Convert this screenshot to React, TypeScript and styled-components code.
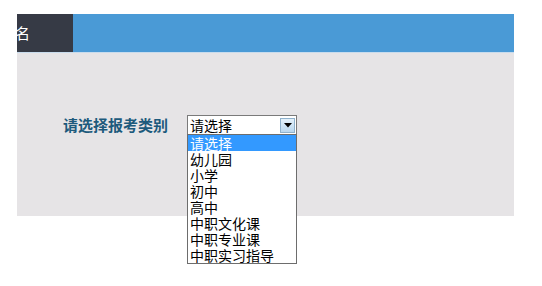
import styled, { createGlobalStyle } from 'styled-components';

const options = ['请选择', '幼儿园', '小学', '初中', '高中', '中职文化课', '中职专业课', '中职实习指导'];

const GlobalStyle = createGlobalStyle`
  html, body {
    margin: 0;
    padding: 0;
    background: #ffffff;
  }
  body {
    font-family: "Noto Sans CJK SC", "Noto Sans", sans-serif;
  }
`;

const App = () => {
  const selected = 0;

  return (
    <Page>
      <GlobalStyle />
      <Panel>
        <Header>
          <Tab>
            <TabText>名</TabText>
          </Tab>
          <Bar />
        </Header>
        <Body>
          <FormRow>
            <Label>请选择报考类别</Label>
            <SelectWrap>
              <SelectBox>
                <SelectValue>{options[selected]}</SelectValue>
                <ArrowButton>
                  <svg width="8" height="5" viewBox="0 0 8 5">
                    <path d="M0 0 H8 L4 4.5 Z" fill="#000" />
                  </svg>
                </ArrowButton>
              </SelectBox>
              <OptionList>
                {options.map((o, i) => (
                  <Option key={o} active={i === selected}>
                    {o}
                  </Option>
                ))}
              </OptionList>
            </SelectWrap>
          </FormRow>
        </Body>
      </Panel>
    </Page>
  );
};

const Page = styled.div`
  padding: 14px 0 0 17px;
  height: 286px;
  box-sizing: border-box;
`;

const Panel = styled.div`
  width: 497px;
`;

const Header = styled.div`
  display: flex;
  height: 38px;
  border-bottom: 1px solid #c9dced;
`;

const Tab = styled.div`
  width: 56px;
  background: #363a45;
  display: flex;
  align-items: center;
  overflow: hidden;
`;

const TabText = styled.span`
  color: #ffffff;
  font-size: 15px;
  line-height: 1;
  margin: -2px 0 0 -2px;
`;

const Bar = styled.div`
  flex: 1;
  background: #4a9ad6;
`;

const Body = styled.div`
  background: #e6e4e6;
  height: 163px;
  padding: 62px 0 0 46px;
  box-sizing: border-box;
`;

const FormRow = styled.div`
  display: flex;
  align-items: center;
  gap: 19px;
`;

const Label = styled.span`
  color: #1d5a7c;
  font-size: 15px;
  font-weight: bold;
  line-height: 20px;
`;

const SelectWrap = styled.div`
  position: relative;
  width: 110px;
`;

const SelectBox = styled.div`
  height: 20px;
  box-sizing: border-box;
  border: 1px solid #7a7a7a;
  background: #ffffff;
  display: flex;
  align-items: center;
  justify-content: space-between;
  padding: 0 1px 0 2px;
`;

const SelectValue = styled.span`
  font-size: 14px;
  line-height: 16px;
  color: #000;
`;

const ArrowButton = styled.span`
  width: 15px;
  height: 15px;
  box-sizing: border-box;
  border: 1px solid #8fb1cc;
  background: linear-gradient(#e4f1fb, #b9d7ef);
  display: flex;
  align-items: center;
  justify-content: center;
`;

const OptionList = styled.div`
  position: absolute;
  top: 19px;
  left: 0;
  width: 110px;
  box-sizing: border-box;
  border: 1px solid #6d6d6d;
  background: #ffffff;
  z-index: 2;
`;

const Option = styled.div<{ active?: boolean }>`
  height: 16px;
  padding-left: 2px;
  font-size: 14px;
  line-height: 16px;
  white-space: nowrap;
  color: ${p => (p.active ? '#ffffff' : '#000000')};
  background: ${p => (p.active ? '#3399ff' : 'transparent')};
`;

export default App;
